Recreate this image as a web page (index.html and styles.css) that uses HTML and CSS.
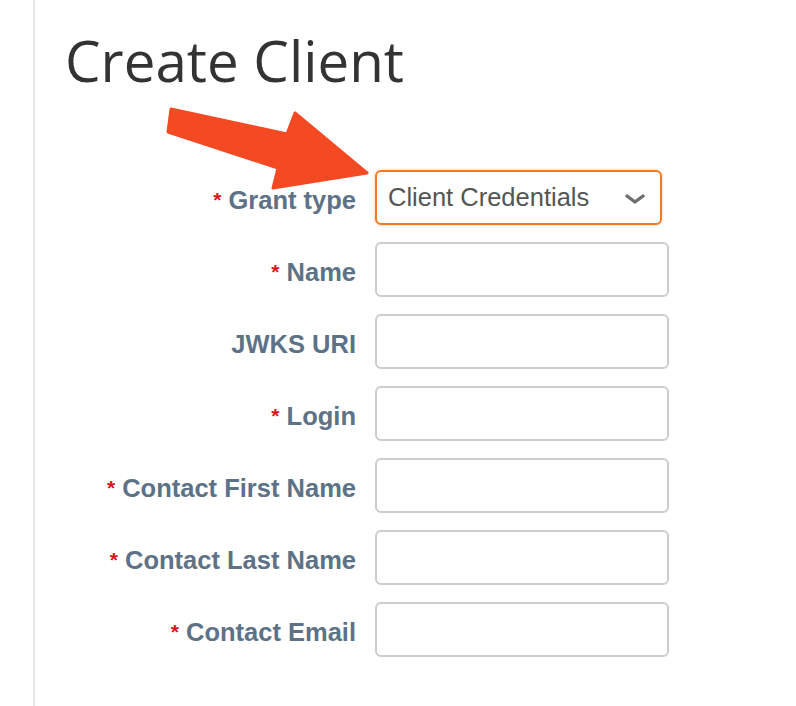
FILE: index.html
```html
<!DOCTYPE html>
<html>
<head>
<meta charset="utf-8">
<link rel="stylesheet" href="styles.css">
</head>
<body>
<div class="page">
  <h1 class="title">Create Client</h1>
  <form class="form">
    <label class="label"><span class="req">*</span> Grant type</label>
    <div class="select">
      <span class="select-text">Client Credentials</span>
      <svg class="chev" width="24" height="14" viewBox="0 0 24 14"><path d="M4 4 L12 10 L20 4" fill="none" stroke="#6e6e6e" stroke-width="3.4" stroke-linecap="round" stroke-linejoin="round"/></svg>
    </div>

    <label class="label"><span class="req">*</span> Name</label>
    <div class="input"></div>

    <label class="label">JWKS URI</label>
    <div class="input"></div>

    <label class="label"><span class="req">*</span> Login</label>
    <div class="input"></div>

    <label class="label"><span class="req">*</span> Contact First Name</label>
    <div class="input"></div>

    <label class="label"><span class="req">*</span> Contact Last Name</label>
    <div class="input"></div>

    <label class="label"><span class="req">*</span> Contact Email</label>
    <div class="input"></div>
  </form>
  <svg class="arrow" width="220" height="100" viewBox="160 100 220 100">
    <polygon points="171,109 287,134 295,113 367,173 273,188 278,168 168,132" fill="#f44a24" stroke="#f44a24" stroke-width="3" stroke-linejoin="round"/>
  </svg>
</div>
</body>
</html>
```

FILE: styles.css
```css
html, body {
  margin: 0;
  padding: 0;
  background: #fff;
}
.page {
  position: relative;
  margin-left: 33px;
  border-left: 2px solid #e5e5e5;
  min-height: 706px;
  box-sizing: border-box;
  padding-top: 23px;
}
.title {
  margin: 0 0 0 30px;
  font-family: "Open Sans", sans-serif;
  font-weight: 400;
  font-size: 56.5px;
  line-height: 76px;
  color: #333;
}
.form {
  display: grid;
  grid-template-columns: 321px 294px;
  column-gap: 19px;
  row-gap: 17px;
  margin-top: 71px;
  align-items: center;
}
.label {
  text-align: right;
  font-family: "Liberation Sans", Arial, sans-serif;
  font-weight: 700;
  font-size: 25.5px;
  color: #5d7287;
  padding-top: 5px;
}
.req {
  color: #d9141b;
  font-size: 21px;
  vertical-align: 2px;
}
.input {
  height: 55px;
  box-sizing: border-box;
  border: 2px solid #cccccc;
  border-radius: 6px;
  background: #fff;
}
.select {
  width: 287px;
  height: 55px;
  box-sizing: border-box;
  border: 2px solid #f07b23;
  border-radius: 6px;
  box-shadow: 0 0 3px rgba(240, 123, 35, 0.45);
  display: flex;
  align-items: center;
  justify-content: space-between;
  padding: 0 13px 0 11px;
}
.select-text {
  font-family: "Liberation Sans", Arial, sans-serif;
  font-size: 25.5px;
  color: #555;
}
.chev {
  filter: blur(0.7px);
  margin-top: 2px;
}
.arrow {
  position: absolute;
  left: 125px;
  top: 100px;
}
```
